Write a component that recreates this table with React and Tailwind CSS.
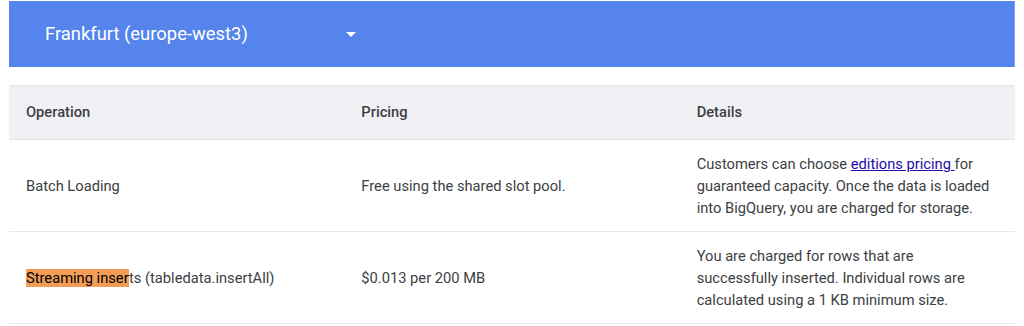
import React from 'react';

const rows = [
  {
    op: 'Batch Loading',
    price: 'Free using the shared slot pool.',
    details: (
      <>
        Customers can choose{' '}
        <a href="#" className="text-[#1a0dab] underline">
          editions pricing{' '}
        </a>
        for guaranteed capacity. Once the data is loaded into BigQuery, you are charged for storage.
      </>
    ),
  },
  {
    op: (
      <>
        <span className="bg-[#f29d57] text-black">Streaming inser</span>ts (tabledata.insertAll)
      </>
    ),
    price: '$0.013 per 200 MB',
    details:
      'You are charged for rows that are successfully inserted. Individual rows are calculated using a 1 KB minimum size.',
  },
];

const App = () => {
  return (
    <div className="w-[1024px] h-[326px] bg-white pt-px px-[9px] font-['Roboto','Liberation_Sans',sans-serif] text-[#3c4043] overflow-hidden">
      {/* Region selector */}
      <div className="h-[66px] bg-[#5585ec] flex items-center pl-9 border-r border-[#7fa3f2]">
        <span className="w-[301px] text-white text-[18.4px]">Frankfurt (europe-west3)</span>
        <svg width="10" height="5" viewBox="0 0 10 5" className="mt-px">
          <path d="M0 0 L10 0 L5 5 Z" fill="#ffffff" />
        </svg>
      </div>

      {/* Pricing table */}
      <div className="mt-[18px] text-[14.7px]">
        <div className="grid grid-cols-3 h-[55px] items-center bg-[#f1f1f5] border-t border-b border-[#e3e3e8] font-medium">
          <div className="pl-[17px]">Operation</div>
          <div className="pl-[17px]">Pricing</div>
          <div className="pl-[17px]">Details</div>
        </div>
        {rows.map((row, i) => (
          <div
            key={i}
            className="grid grid-cols-3 h-[92px] items-center border-b border-[#e8e8ec] leading-[22px]"
          >
            <div className="pl-[17px]">{row.op}</div>
            <div className="pl-[17px]">{row.price}</div>
            <div className="pl-[17px] pr-[22px]">{row.details}</div>
          </div>
        ))}
      </div>
    </div>
  );
};

export default App;
